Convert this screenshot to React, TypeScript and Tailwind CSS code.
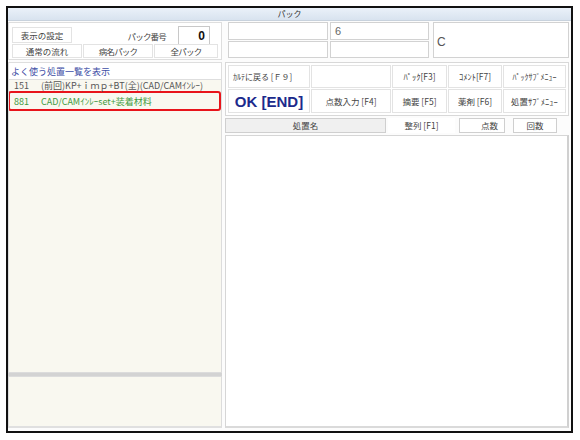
import React from "react";

const btn =
  "flex items-center justify-center bg-white border border-[#e3e3e3] whitespace-nowrap";

export default function App() {
  return (
    <div className="w-[580px] h-[440px] bg-white pt-[6px] pl-[6px] font-['Noto_Sans_CJK_JP','Noto_Sans',sans-serif] text-[8.5px] leading-none text-[#444]">
      <div className="w-[567px] h-[427px] border-2 border-[#111] flex flex-col bg-[#fcfcfc]">
        {/* title bar */}
        <div className="h-[13px] bg-gradient-to-b from-[#eaf1f9] to-[#d8e3ef] border-b border-[#c8d2dd] flex items-center justify-center text-[8px] text-[#333]">
          パック
        </div>
        <div className="flex-1 flex pt-[1px] pb-[3px] min-h-0">
          {/* left column */}
          <div className="w-[214px] flex flex-col">
            {/* top left panel */}
            <div className="h-[38px] border border-[#dedede] bg-white px-[3px] pt-[3px] flex flex-col">
              <div className="flex items-start h-[19px]">
                <div className={btn + " w-[60px] h-[16px] mt-[1px]"}>表示の設定</div>
                <div className="flex-1" />
                <div className="mt-[6px] mr-[12px] tracking-[-0.8px]">パック番号</div>
                <div className="w-[32px] h-[19px] border border-[#c8c8c8] bg-white flex items-center justify-end pr-[4px] text-[12px] font-bold text-[#111] font-['Liberation_Sans',sans-serif]">
                  0
                </div>
                <div className="w-[8px]" />
              </div>
              <div className="flex gap-[1px] mt-[-1px]">
                <div className={btn + " w-[70px] h-[14px]"}>通常の流れ</div>
                <div className={btn + " w-[70px] h-[14px] tracking-[-0.8px]"}>病名パック</div>
                <div className={btn + " flex-1 h-[14px] tracking-[-0.8px]"}>全パック</div>
              </div>
            </div>
            {/* header */}
            <div className="mt-[2px] h-[18px] border border-[#dedede] bg-white flex items-center pl-[2px] text-[9px] text-[#3d4ea6]">
              よく使う処置一覧を表示
            </div>
            {/* list */}
            <div className="flex-1 bg-[#f9f8f0] border-x border-b border-[#dcdcdc] overflow-hidden">
              <div className="-mt-[6px]">
                <div className="h-[17px] flex items-center pt-[5px] text-[9px] text-[#555] whitespace-nowrap">
                  <span className="w-[32px] pl-[5px]">151</span>
                  <span>(前回)KP+ｉｍｐ+BT(全)(CAD/CAMｲﾝﾚｰ)</span>
                </div>
                <div className="h-[20px] border-2 border-[#e8141b] rounded-[3px] -ml-[1px] flex items-center text-[9px] text-[#3f9a3f] whitespace-nowrap">
                  <span className="w-[31px] pl-[4px]">881</span>
                  <span>CAD/CAMｲﾝﾚｰset+装着材料</span>
                </div>
              </div>
            </div>
            <div className="h-[3px] bg-[#d3d3d3]" />
            <div className="h-[52px] bg-[#f9f8f0] border border-[#dcdcdc] border-b-2 border-b-[#e0e0e0]" />
          </div>
          {/* right column */}
          <div className="w-[344px] ml-[3px] flex flex-col">
            {/* top inputs */}
            <div className="h-[37px] flex">
              <div className="ml-[3px] w-[100px] flex flex-col gap-[1px]">
                <div className="h-[18px] border border-[#d2d2d2] bg-white" />
                <div className="h-[17px] border border-[#d2d2d2] bg-white" />
              </div>
              <div className="ml-[2px] w-[99px] flex flex-col gap-[1px]">
                <div className="h-[18px] border border-[#d2d2d2] bg-white pl-[4px] pt-[3px] text-[11px] text-[#666] font-['Liberation_Sans',sans-serif]">
                  6
                </div>
                <div className="h-[17px] border border-[#d2d2d2] bg-white" />
              </div>
              <div className="ml-[4px] w-[136px] h-[36px] border border-[#d2d2d2] bg-white flex items-center pl-[3px] pt-[4px] text-[12px] text-[#555] font-['Liberation_Sans',sans-serif]">
                C
              </div>
            </div>
            {/* button panel */}
            <div className="mt-[3px] h-[54px] border border-[#d8d8d8] bg-white p-[2px] flex flex-col gap-[1px]">
              <div className="flex h-[23px] gap-[1px]">
                <div className={btn + " w-[82px] justify-start pl-[4px] text-[8px]"}>ｶﾙﾃに戻る [Ｆ９]</div>
                <div className={btn + " w-[80px]"} />
                <div className={btn + " w-[55px]"}>ﾊﾟｯｸ[F3]</div>
                <div className={btn + " w-[54px]"}>ｺﾒﾝﾄ[F7]</div>
                <div className={btn + " flex-1 text-[8px]"}>ﾊﾟｯｸｻﾌﾞﾒﾆｭｰ</div>
              </div>
              <div className="flex h-[24px] gap-[1px]">
                <div className={btn + " w-[82px] text-[15px] font-bold text-[#1c2a8c] font-['Liberation_Sans',sans-serif]"}>
                  OK [END]
                </div>
                <div className={btn + " w-[80px]"}>点数入力 [F4]</div>
                <div className={btn + " w-[55px]"}>摘要 [F5]</div>
                <div className={btn + " w-[54px]"}>薬剤 [F6]</div>
                <div className={btn + " flex-1"}>処置ｻﾌﾞﾒﾆｭｰ</div>
              </div>
            </div>
            {/* table header */}
            <div className="mt-[2px] h-[16px] flex">
              <div className="w-[161px] h-[15px] bg-[#f0f0f0] border border-[#cfcfcf] flex items-center justify-center">
                処置名
              </div>
              <div className="ml-[2px] w-[67px] h-[15px] bg-white flex items-center justify-center">整列 [F1]</div>
              <div className="ml-[4px] w-[46px] h-[15px] bg-white border border-[#cfcfcf] flex items-center justify-end pr-[6px]">
                点数
              </div>
              <div className="ml-[8px] w-[44px] h-[15px] bg-white border border-[#cfcfcf] flex items-center justify-center">
                回数
              </div>
            </div>
            {/* table body */}
            <div className="mt-[1px] flex-1 bg-white border border-[#d6d6d6] border-r-2 border-b-2 border-r-[#d0d0d0] border-b-[#dadada]" />
          </div>
        </div>
      </div>
    </div>
  );
}
